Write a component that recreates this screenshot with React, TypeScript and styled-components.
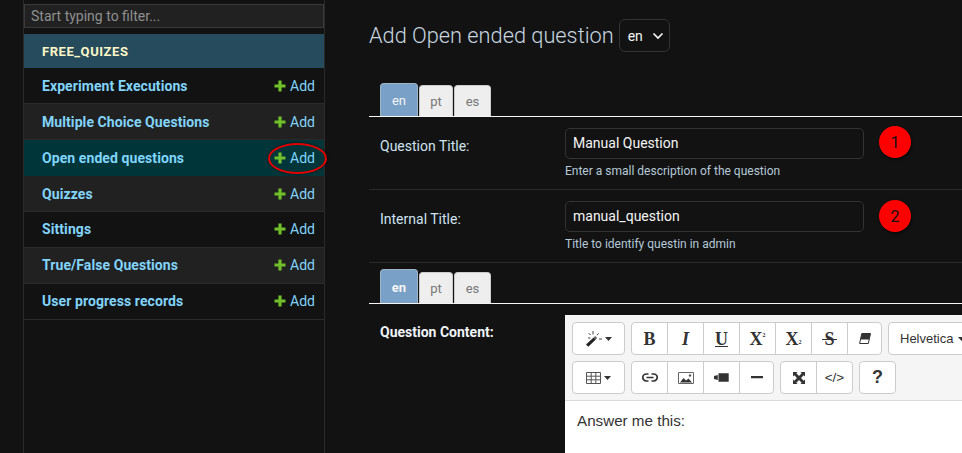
import React from "react";
import styled, { createGlobalStyle } from "styled-components";

const Global = createGlobalStyle`
  html, body { margin: 0; padding: 0; height: 453px; overflow: hidden; background: #121212; }
  body { font-family: Roboto, "Liberation Sans", sans-serif; }
  #root { height: 453px; overflow: hidden; }
  * { box-sizing: border-box; }
`;

const Page = styled.div`
  display: flex;
  width: 962px;
  height: 453px;
  overflow: hidden;
  padding-left: 23px;
`;

const Sidebar = styled.nav`
  flex: 0 0 302px;
  height: 453px;
  border-left: 1px solid #2a2a2a;
  border-right: 1px solid #2a2a2a;
  padding-top: 4px;
`;

const Filter = styled.div`
  height: 24px;
  margin-bottom: 6px;
  padding: 0 6px;
  background: #212121;
  border: 1px solid #3a3a3a;
  color: #8f8f8f;
  font-size: 14px;
  line-height: 22px;
`;

const AppHeader = styled.div`
  height: 34px;
  padding: 1px 0 0 18px;
  background: #264b5d;
  color: #fdf7c8;
  font-size: 13px;
  font-weight: 700;
  letter-spacing: 0.55px;
  line-height: 33px;
`;

const ModelRow = styled.div<{ $tone: "dark" | "light" | "active"; $lift?: boolean }>`
  position: relative;
  display: flex;
  align-items: center;
  justify-content: space-between;
  height: 36px;
  padding: 0 9px ${(p) => (p.$lift ? 1 : 0)}px 18px;
  border-bottom: 1px solid ${(p) => (p.$tone === "active" ? "#00363a" : "#2a2a2a")};
  background: ${(p) => (p.$tone === "active" ? "#00363a" : p.$tone === "light" ? "#212121" : "#121212")};
`;

const ModelLink = styled.span`
  color: #81d4fa;
  font-size: 14px;
  font-weight: 700;
  letter-spacing: 0.08px;
`;

const AddLink = styled.span`
  display: flex;
  align-items: center;
  gap: 4px;
  color: #81d4fa;
  font-size: 14px;
`;

const CircleMark = styled.span`
  position: absolute;
  left: 244px;
  top: 3px;
  width: 59px;
  height: 31px;
  border: 2px solid #e00000;
  border-radius: 50%;
  box-shadow: 0 0 3px rgba(0, 0, 0, 0.7);
`;

const Main = styled.main`
  flex: 1;
  min-width: 0;
  padding: 19px 0 0 44px;
`;

const TitleRow = styled.div`
  display: flex;
  align-items: center;
  gap: 5px;
  height: 33px;
  margin-bottom: 31px;
`;

const Title = styled.h1`
  margin: 0;
  color: #c8d6e0;
  font-size: 21.75px;
  font-weight: 300;
  line-height: 33px;
`;

const LangSelect = styled.div`
  display: flex;
  align-items: center;
  justify-content: space-between;
  width: 51px;
  height: 33px;
  padding: 0 5px 0 8px;
  border: 1px solid #333;
  border-radius: 6px;
  color: #f5f5f5;
  font-size: 14px;
`;

const Tabs = styled.div<{ $second?: boolean }>`
  display: flex;
  align-items: flex-end;
  height: ${(p) => (p.$second ? 35 : 34)}px;
  margin-top: ${(p) => (p.$second ? 6 : 0)}px;
  padding-left: 11px;
  border-bottom: 1px solid #f5f5f5;
`;

const Tab = styled.div<{ $active?: boolean; $w: number; $h: number; $bold?: boolean }>`
  display: flex;
  align-items: center;
  justify-content: center;
  width: ${(p) => p.$w}px;
  height: ${(p) => p.$h}px;
  margin-right: 1px;
  padding-top: 1px;
  border: 1px solid ${(p) => (p.$active ? "#a0b4c8" : "#ccc")};
  border-bottom: none;
  border-radius: 4px 4px 0 0;
  background: ${(p) => (p.$active ? "#79a0c6" : "#eeeeee")};
  color: ${(p) => (p.$active ? "#f5f5f5" : "#777")};
  font-size: 13px;
  font-weight: ${(p) => (p.$bold ? 700 : 400)};
`;

const FormRow = styled.div`
  display: flex;
  height: 73px;
  padding: 11px 0 0 11px;
  border-bottom: 1px solid #2a2a2a;
`;

const Label = styled.label<{ $bold?: boolean }>`
  flex: 0 0 185px;
  padding-top: 10px;
  color: #cfe2f0;
  font-size: 14px;
  line-height: 17px;
  font-weight: ${(p) => (p.$bold ? 700 : 400)};
`;

const Field = styled.div`
  display: flex;
  flex-direction: column;
`;

const FieldTop = styled.div`
  position: relative;
`;

const TextInput = styled.div`
  width: 299px;
  height: 31px;
  padding: 0 7px;
  border: 1px solid #333;
  border-radius: 5px;
  color: #f5f5f5;
  font-size: 14px;
  line-height: 29px;
`;

const Help = styled.div`
  margin-top: 5px;
  color: #b5c9d8;
  font-size: 12px;
  line-height: 14px;
`;

const Badge = styled.span<{ $top: number }>`
  position: absolute;
  left: 314px;
  top: ${(p) => p.$top}px;
  display: flex;
  align-items: center;
  justify-content: center;
  width: 32px;
  height: 32px;
  border-radius: 50%;
  background: #fe0000;
  color: #111;
  font-size: 16px;
  box-shadow: 1px 2px 3px rgba(0, 0, 0, 0.5);
`;

const ContentRow = styled.div`
  display: flex;
  padding: 11px 0 0 11px;
`;

const ContentLabel = styled(Label)`
  padding-top: 9px;
  color: #f0f4f8;
`;

const Editor = styled.div`
  flex: none;
  width: 420px;
  height: 200px;
  background: #fff;
`;

const Toolbar = styled.div`
  display: flex;
  flex-direction: column;
  gap: 6px;
  height: 86px;
  padding: 7px 0 0 7px;
  background: #f5f5f5;
  border-bottom: 1px solid #ddd;
`;

const ToolRow = styled.div`
  display: flex;
  gap: 6px;
`;

const ToolGroup = styled.div`
  display: flex;
  flex: none;
  height: 33px;
  background: #fff;
  border: 1px solid #ccc;
  border-radius: 4px;
  overflow: hidden;
`;

const ToolBtn = styled.span<{ $w?: number }>`
  display: flex;
  align-items: center;
  justify-content: center;
  gap: 3px;
  width: ${(p) => p.$w ?? 36}px;
  height: 100%;
  color: #333;
  font-size: 14px;
  &:not(:last-child) { border-right: 1px solid #ccc; }
`;

const DropBtn = styled(ToolBtn)`
  justify-content: flex-start;
  gap: 5px;
  padding-left: 11px;
`;

const Glyph = styled.span<{ $italic?: boolean; $under?: boolean }>`
  font-family: "Liberation Serif", serif;
  font-weight: 700;
  font-size: 18px;
  line-height: 18px;
  color: #333;
  font-style: ${(p) => (p.$italic ? "italic" : "normal")};
  text-decoration: ${(p) => (p.$under ? "underline" : "none")};
  text-decoration-thickness: 1px;
`;

const StrikeGlyph = styled(Glyph)`
  position: relative;
  &::after {
    content: "";
    position: absolute;
    left: -2px;
    right: -2px;
    top: 9px;
    height: 1px;
    background: #333;
  }
`;

const Script = styled.span<{ $up?: boolean }>`
  font-family: "Liberation Serif", serif;
  font-size: 6px;
  font-weight: 700;
  margin-left: -3px;
  align-self: ${(p) => (p.$up ? "flex-start" : "flex-end")};
  margin-top: ${(p) => (p.$up ? "9px" : "0")};
  margin-bottom: ${(p) => (p.$up ? "0" : "9px")};
`;

const FontName = styled.span`
  color: #333;
  font-family: "Liberation Sans", sans-serif;
  font-size: 13px;
  white-space: nowrap;
`;

const Code = styled.span`
  font-family: "Liberation Sans", sans-serif;
  font-size: 13.5px;
  color: #333;
`;

const HelpMark = styled.span`
  font-family: "Liberation Sans", sans-serif;
  font-size: 18px;
  font-weight: 700;
  color: #333;
`;

const EditorBody = styled.div`
  padding: 10px 12px;
  color: #333;
  font-family: "Liberation Sans", sans-serif;
  font-size: 15.2px;
  line-height: 20px;
`;

const Plus = () => (
  <svg width="12" height="12" viewBox="0 0 12 12" aria-hidden="true">
    <path d="M4.4 0.5h3.2v3.9h3.9v3.2H7.6v3.9H4.4V7.6H0.5V4.4h3.9z" fill="#70bf2b" />
  </svg>
);

const Caret = () => (
  <svg width="7" height="4" viewBox="0 0 7 4" aria-hidden="true">
    <path d="M0 0h7L3.5 4z" fill="#333" />
  </svg>
);

const Chevron = () => (
  <svg width="12" height="8" viewBox="0 0 12 8" aria-hidden="true">
    <path d="M1.5 1.5 6 6l4.5-4.5" fill="none" stroke="#f5f5f5" strokeWidth="1.7" />
  </svg>
);

const Wand = () => (
  <svg width="16" height="16" viewBox="0 0 16 16" aria-hidden="true">
    <path d="M0 13.6 7.6 6.4l2.2 2.2-7.5 7.2z" fill="#222" />
    <path d="M7.6 6.4 9.2 5l2 2.1-1.4 1.5z" fill="#666" />
    <path d="M7 0v3.5M2.8 2.2l1.8 1.8M2 7h2.5M12.6 2.4l-1.8 1.8M13 8h3" stroke="#444" strokeWidth="1" fill="none" />
  </svg>
);

const TableIcon = () => (
  <svg width="15" height="12" viewBox="0 0 15 12" aria-hidden="true">
    <path d="M.5.5h14v11H.5zM.5 4.2h14M.5 7.8h14M5.2.5v11M9.8.5v11" fill="none" stroke="#555" strokeWidth="1" />
  </svg>
);

const Eraser = () => (
  <svg width="12" height="11" viewBox="0 0 12 11" aria-hidden="true">
    <path d="M2.8.5h8.7l-2.2 10H.6z" fill="#fff" stroke="#333" strokeWidth="1" />
    <path d="M2.8.5h8.7L10.2 6.5H1.5z" fill="#333" />
  </svg>
);

const LinkIcon = () => (
  <svg width="16" height="9" viewBox="0 0 16 9" aria-hidden="true">
    <path d="M6.5 1H4.3a3.5 3.5 0 0 0 0 7h2.2M9.5 1h2.2a3.5 3.5 0 0 1 0 7H9.5M4.5 4.5h7" fill="none" stroke="#333" strokeWidth="1.7" />
  </svg>
);

const PictureIcon = () => (
  <svg width="16" height="12" viewBox="0 0 16 12" aria-hidden="true">
    <path d="M.5.5h15v11H.5z" fill="#fff" stroke="#666" strokeWidth="1" />
    <path d="M2 10.5l3.5-4.5 2.5 2.5 2.5-2 3.5 4z" fill="#333" />
    <circle cx="12" cy="3.5" r="1.2" fill="#555" />
  </svg>
);

const VideoIcon = () => (
  <svg width="15" height="9" viewBox="0 0 15 9" aria-hidden="true">
    <path d="M4.5.3h10.2v8.4H4.5zM0 3l3.8-1v5L0 6z" fill="#333" />
  </svg>
);

const Minus = () => (
  <svg width="12" height="3" viewBox="0 0 12 3" aria-hidden="true">
    <path d="M0 0h12v2.2H0z" fill="#333" />
  </svg>
);

const Expand = () => (
  <svg width="12" height="12" viewBox="0 0 13 13" aria-hidden="true">
    <path d="M0 0h5L3.6 1.4 6.5 4.3l2.9-2.9L8 0h5v5l-1.4-1.4-2.9 2.9 2.9 2.9L13 8v5H8l1.4-1.4-2.9-2.9-2.9 2.9L5 13H0V8l1.4 1.4 2.9-2.9-2.9-2.9L0 5z" fill="#333" />
  </svg>
);

const models = [
  { name: "Experiment Executions", tone: "dark", lift: false },
  { name: "Multiple Choice Questions", tone: "light", lift: false },
  { name: "Open ended questions", tone: "active", lift: false },
  { name: "Quizzes", tone: "light", lift: false },
  { name: "Sittings", tone: "dark", lift: true },
  { name: "True/False Questions", tone: "light", lift: true },
  { name: "User progress records", tone: "dark", lift: true },
] as const;

export default function App() {
  return (
    <Page>
      <Global />
      <Sidebar>
        <Filter>Start typing to filter...</Filter>
        <AppHeader>FREE_QUIZES</AppHeader>
        {models.map((m) => (
          <ModelRow key={m.name} $tone={m.tone} $lift={m.lift}>
            <ModelLink>{m.name}</ModelLink>
            <AddLink>
              <Plus />
              Add
            </AddLink>
            {m.tone === "active" && <CircleMark />}
          </ModelRow>
        ))}
      </Sidebar>
      <Main>
        <TitleRow>
          <Title>Add Open ended question</Title>
          <LangSelect>
            en
            <Chevron />
          </LangSelect>
        </TitleRow>
        <Tabs>
          <Tab $active $w={38} $h={33}>en</Tab>
          <Tab $w={34} $h={31}>pt</Tab>
          <Tab $w={37} $h={31}>es</Tab>
        </Tabs>
        <FormRow>
          <Label>Question Title:</Label>
          <Field>
            <FieldTop>
              <TextInput>Manual Question</TextInput>
              <Badge $top={-2}>1</Badge>
            </FieldTop>
            <Help>Enter a small description of the question</Help>
          </Field>
        </FormRow>
        <FormRow>
          <Label>Internal Title:</Label>
          <Field>
            <FieldTop>
              <TextInput>manual_question</TextInput>
              <Badge $top={-1}>2</Badge>
            </FieldTop>
            <Help>Title to identify questin in admin</Help>
          </Field>
        </FormRow>
        <Tabs $second>
          <Tab $active $bold $w={38} $h={34}>en</Tab>
          <Tab $w={34} $h={31}>pt</Tab>
          <Tab $w={37} $h={31}>es</Tab>
        </Tabs>
        <ContentRow>
          <ContentLabel $bold>Question Content:</ContentLabel>
          <Editor>
            <Toolbar>
              <ToolRow>
                <ToolGroup>
                  <ToolBtn $w={51}><Wand /><Caret /></ToolBtn>
                </ToolGroup>
                <ToolGroup>
                  <ToolBtn><Glyph>B</Glyph></ToolBtn>
                  <ToolBtn><Glyph $italic>I</Glyph></ToolBtn>
                  <ToolBtn><Glyph $under>U</Glyph></ToolBtn>
                  <ToolBtn><Glyph>X</Glyph><Script $up>2</Script></ToolBtn>
                  <ToolBtn><Glyph>X</Glyph><Script>2</Script></ToolBtn>
                  <ToolBtn><StrikeGlyph>S</StrikeGlyph></ToolBtn>
                  <ToolBtn $w={33}><Eraser /></ToolBtn>
                </ToolGroup>
                <ToolGroup>
                  <DropBtn $w={90}><FontName>Helvetica</FontName><Caret /></DropBtn>
                </ToolGroup>
              </ToolRow>
              <ToolRow>
                <ToolGroup>
                  <ToolBtn $w={51}><TableIcon /><Caret /></ToolBtn>
                </ToolGroup>
                <ToolGroup>
                  <ToolBtn><LinkIcon /></ToolBtn>
                  <ToolBtn><PictureIcon /></ToolBtn>
                  <ToolBtn><VideoIcon /></ToolBtn>
                  <ToolBtn $w={33}><Minus /></ToolBtn>
                </ToolGroup>
                <ToolGroup>
                  <ToolBtn><Expand /></ToolBtn>
                  <ToolBtn $w={35}><Code>&lt;/&gt;</Code></ToolBtn>
                </ToolGroup>
                <ToolGroup>
                  <ToolBtn $w={35}><HelpMark>?</HelpMark></ToolBtn>
                </ToolGroup>
              </ToolRow>
            </Toolbar>
            <EditorBody>Answer me this:</EditorBody>
          </Editor>
        </ContentRow>
      </Main>
    </Page>
  );
}
